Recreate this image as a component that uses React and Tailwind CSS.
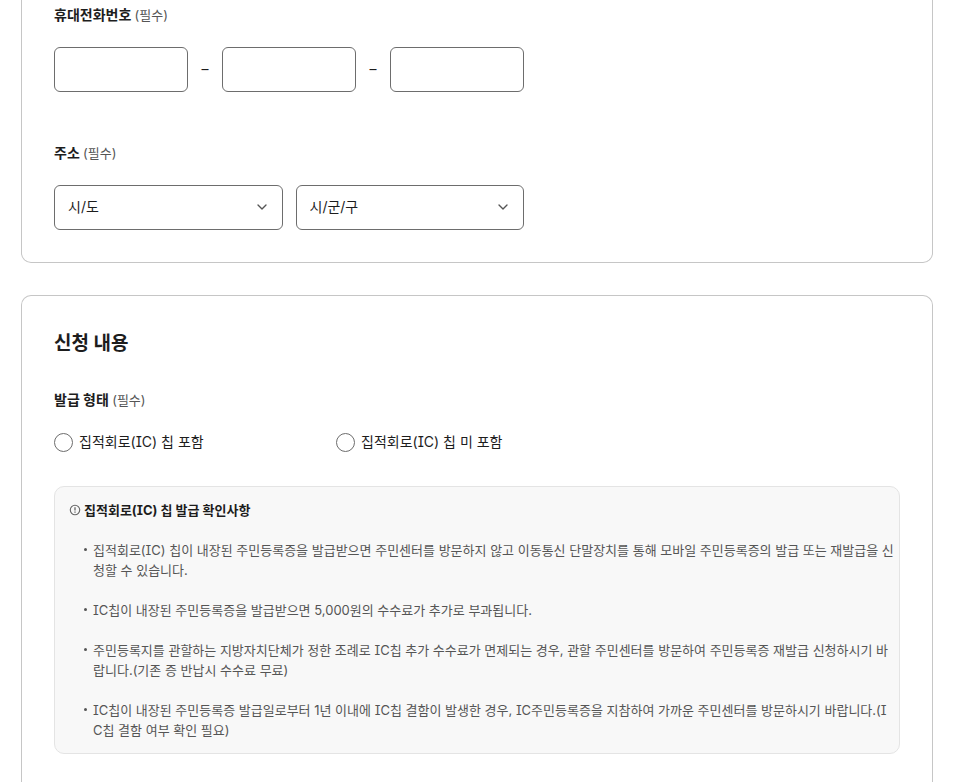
import { ChevronDown } from 'lucide-react';

const PHONE_PARTS = ['앞자리', '가운데 자리', '뒷자리'];
const CHIP_OPTIONS = [
  { value: 'with', label: '집적회로(IC) 칩 포함' },
  { value: 'without', label: '집적회로(IC) 칩 미 포함' },
];
const NOTES = [
  '집적회로(IC) 칩이 내장된 주민등록증을 발급받으면 주민센터를 방문하지 않고 이동통신 단말장치를 통해 모바일 주민등록증의 발급 또는 재발급을 신청할 수 있습니다.',
  'IC칩이 내장된 주민등록증을 발급받으면 5,000원의 수수료가 추가로 부과됩니다.',
  '주민등록지를 관할하는 지방자치단체가 정한 조례로 IC칩 추가 수수료가 면제되는 경우, 관할 주민센터를 방문하여 주민등록증 재발급 신청하시기 바랍니다.(기존 증 반납시 수수료 무료)',
  'IC칩이 내장된 주민등록증 발급일로부터 1년 이내에 IC칩 결함이 발생한 경우, IC주민등록증을 지참하여 가까운 주민센터를 방문하시기 바랍니다.(I\nC칩 결함 여부 확인 필요)',
];

function Required({ children }) {
  return (
    <span className="text-[14px] leading-6 font-bold">
      {children} <span className="text-[13px] font-normal text-[#555]">(필수)</span>
    </span>
  );
}

function Region({ label }) {
  return (
    <div className="grid flex-1 items-center">
      <select
        aria-label={label}
        className="col-start-1 row-start-1 h-[45px] w-full appearance-none rounded-md border border-[#6d6d6d] bg-white px-[13px] pb-[2px] text-[14px]"
      >
        <option>{label}</option>
      </select>
      <ChevronDown size={16} className="pointer-events-none col-start-1 row-start-1 mr-[13px] mb-px justify-self-end text-[#555]" />
    </div>
  );
}

function InfoIcon() {
  return (
    <svg width="12" height="12" viewBox="0 0 12 12" fill="none" stroke="#666" aria-hidden="true">
      <circle cx="6" cy="6" r="4.7" strokeWidth="1.1" />
      <path d="M6 3.2v3.4M6 7.5v1.2" strokeWidth="1.3" />
    </svg>
  );
}

export default function App() {
  return (
    <main className="flex h-screen flex-col gap-8 overflow-hidden bg-white pr-[26px] pl-[21px] font-['Inter','Noto_Sans_CJK_KR',sans-serif] text-[#1d1d1d] [font-feature-settings:'cv08']">
      <section className="shrink-0 rounded-b-[10px] border border-t-0 border-[#c6c6c6] px-8 pt-[3px] pb-8">
        <fieldset className="flex flex-col gap-5">
          <legend className="contents"><Required>휴대전화번호</Required></legend>
          <div className="flex w-[470px] items-center">
            {PHONE_PARTS.map((part, i) => (
              <div key={part} className="flex flex-1 items-center">
                <input type="tel" aria-label={part} className="h-[45px] w-[134px] rounded-md border border-[#6d6d6d] px-3" />
                {i < 2 && <span className="w-[34px] pb-[2px] text-center text-[14px]">–</span>}
              </div>
            ))}
          </div>
        </fieldset>
        <fieldset className="mt-[49px] flex flex-col gap-5">
          <legend className="contents"><Required>주소</Required></legend>
          <div className="flex w-[470px] gap-[13px]">
            <Region label="시/도" />
            <Region label="시/군/구" />
          </div>
        </fieldset>
      </section>

      <section className="shrink-0 rounded-t-[10px] border border-b-0 border-[#c6c6c6] px-8 pt-8 pb-8">
        <h2 className="text-[19px] leading-8 font-bold">신청 내용</h2>
        <fieldset className="mt-7 flex flex-col gap-[18px]">
          <legend className="contents"><Required>발급 형태</Required></legend>
          <div className="grid grid-cols-3">
            {CHIP_OPTIONS.map(o => (
              <label key={o.value} className="flex items-center gap-[6px] text-[14px] leading-6">
                <input type="radio" name="chip" value={o.value} className="size-[19px] appearance-none rounded-full border border-[#6d6d6d] bg-white checked:border-[6px]" />
                {o.label}
              </label>
            ))}
          </div>
        </fieldset>
        <div className="mt-8 rounded-[10px] border border-[#e4e4e4] bg-[#f8f8f8] py-[13px] pr-[3px] pl-[14px]">
          <h3 className="flex items-center gap-[3px] text-[13px] leading-5 font-bold">
            <InfoIcon />
            집적회로(IC) 칩 발급 확인사항
          </h3>
          <ul className="mt-5 flex flex-col gap-5 pl-[15px] text-[13px] leading-5 text-[#555]">
            {NOTES.map(note => (
              <li key={note} className="flex gap-[6px]">
                <span className="mt-2 size-[3px] shrink-0 rounded-full bg-[#555]" />
                <span className="break-all whitespace-pre-line">{note}</span>
              </li>
            ))}
          </ul>
        </div>
      </section>
    </main>
  );
}
